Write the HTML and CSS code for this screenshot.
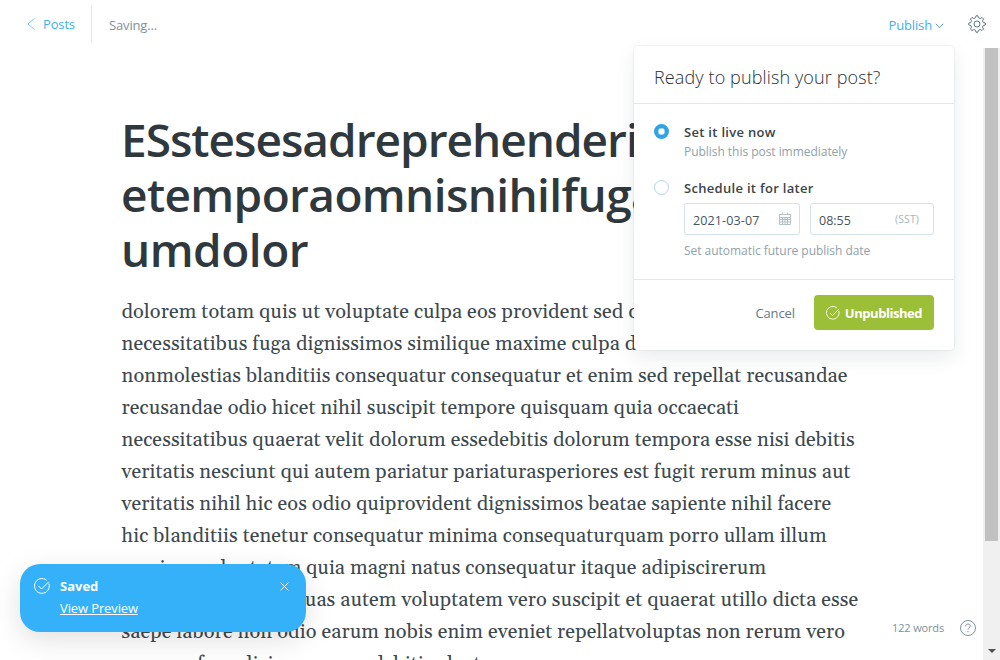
FILE: index.html
```
<!DOCTYPE html>
<html lang="en">
<head>
<meta charset="utf-8">
<title>Editor</title>
<link rel="stylesheet" href="styles.css">
</head>
<body>
<header class="topbar">
  <a class="back"><svg width="8" height="12" viewBox="0 0 8 12"><path d="M7.500.5 1 6l6.500 5.500"/></svg>Posts</a>
  <span class="status">Saving...</span>
  <a class="publish">Publish<svg width="9" height="6" viewBox="0 0 9 6"><path d="m.8.8 3.700 4 3.700-4"/></svg></a>
  <svg class="gear" width="18" height="18" viewBox="0 0 18 18"><circle cx="9" cy="9" r="3"/><path d="M7.500 2.800 8 .8h2l.5 2 1.700.7 1.800-1.100 1.600 1.600-1.100 1.800.7 1.700 2 .5v2l-2 .5-.7 1.700 1.100 1.800-1.600 1.600-1.800-1.100-1.700.7-.5 2H8l-.5-2-1.700-.7L4 15.600 2.400 14l1.100-1.800-.7-1.700-2-.5V8l2-.5.7-1.700L2.400 4 4 2.400l1.800 1.100z"/></svg>
</header>

<main class="workspace">
  <article class="post">
    <h1 class="title">ESstesesadreprehenderit<br><span class="title-mid">etemporaomnisnihilfuga</span><br><span class="title-end">umdolor</span></h1>
    <p class="content">dolorem totam quis ut voluptate culpa eos provident sed dolor<br>
    necessitatibus fuga dignissimos similique maxime culpa dicta<br>
    nonmolestias blanditiis consequatur consequatur et enim sed repellat recusandae<br>
    recusandae odio hicet nihil suscipit tempore quisquam quia occaecati<br>
    necessitatibus quaerat velit dolorum essedebitis dolorum tempora esse nisi debitis<br>
    veritatis nesciunt qui autem pariatur pariaturasperiores est fugit rerum minus aut<br>
    veritatis nihil hic eos odio quiprovident dignissimos beatae sapiente nihil facere<br>
    hic blanditiis tenetur consequatur minima consequaturquam porro ullam illum<br>
    <span class="lead lead-a">maxime voluptatem</span>quia magni natus consequatur itaque adipiscirerum<br>
    <span class="lead lead-b">consequatur itaque</span>quas autem voluptatem vero suscipit et quaerat utillo dicta esse<br>
    saepe labore non odio earum nobis enim eveniet repellatvoluptas non rerum vero<br>
    rerum a fuga dicimus quam debitis ab et</p>
  </article>
  <div class="scrollbar"><div class="thumb"></div><div class="arrow"></div></div>
</main>

<section class="popup">
  <h2 class="popup-title">Ready to publish your post?</h2>
  <div class="options">
    <div class="option">
      <i class="radio on"></i>
      <div>
        <div class="label">Set it live now</div>
        <div class="hint hint-now">Publish this post immediately</div>
      </div>
    </div>
    <div class="option">
      <i class="radio"></i>
      <div>
        <div class="label">Schedule it for later</div>
        <div class="fields">
          <div class="field date"><span class="date-text">2021-03-07</span><svg width="12" height="13" viewBox="0 0 12 13"><path d="M.5 2.500h11v10H.5zM.5 5.500h11M.5 7.500h11M.5 10h11M3.500 5v7.500M6 5v7.500M8.500 5v7.500M3.500.5v2M8.500.5v2"/></svg></div>
          <div class="field time"><span>08:55</span><span class="zone">(SST)</span></div>
        </div>
        <div class="hint">Set automatic future publish date</div>
      </div>
    </div>
  </div>
  <footer class="actions">
    <span class="cancel">Cancel</span>
    <button class="confirm"><svg width="14" height="14" viewBox="0 0 16 16"><path d="M14.700 5.500A7.300 7.300 0 1 1 12.500 2.200M4.500 8l3 3 7-7.500"/></svg>Unpublished</button>
  </footer>
</section>

<aside class="toast">
  <svg width="16" height="16" viewBox="0 0 16 16"><path d="M14.900 5.500A7.400 7.400 0 1 1 12.600 2.200M4.300 7.800l3.200 3.200 7.200-7.200"/></svg>
  <div class="toast-text"><b>Saved</b><a class="preview">View Preview</a></div>
  <svg class="close" width="9" height="9" viewBox="0 0 9 9"><path d="m.7.7 7.600 7.600M8.300.7.7 8.300"/></svg>
</aside>

<div class="info"><span>122 words</span><svg width="16" height="16" viewBox="0 0 16 16"><circle cx="8" cy="8" r="7.500"/><path d="M5.700 6.300C5.700 3.300 10.300 3.300 10.300 6c0 1.700-2.300 1.700-2.300 3.600M8 11v1.200"/></svg></div>
</body>
</html>
```
FILE: styles.css
```
* { box-sizing: border-box; }
body {
  margin: 0;
  width: 1000px;
  height: 660px;
  overflow: hidden;
  display: flex;
  flex-direction: column;
  position: relative;
  background: #fff;
  color: #394047;
  font: 13px/18px "Open Sans", "Noto Sans", sans-serif;
}
svg { fill: none; stroke: currentColor; flex: none; display: block; }

.topbar { height: 48px; flex: none; display: flex; align-items: center; padding: 0 14px 0 27px; }
.back {
  display: flex; align-items: center; gap: 8px;
  width: 65px; height: 36px; margin-top: -1px;
  border-right: 1px solid #dfe8ef;
  color: #3eb0ef; letter-spacing: -.15px;
}
.back svg { color: #7ccaf4; }
.status { margin: 1px 0 0 17px; color: #80919c; letter-spacing: -.15px; }
.publish { margin: 1px 0 0 auto; display: flex; align-items: center; gap: 3px; color: #3eb0ef; letter-spacing: -.15px; }
.publish svg { color: #6393ad; margin-top: 2px; }
.gear { margin-left: 24px; color: #607883; stroke-width: 1; }

.workspace { flex: 1; min-height: 0; display: flex; overflow: hidden; }
.post { flex: 1; padding: 64px 0 0 121.500px; white-space: nowrap; overflow: hidden; }
.title {
  margin: 0 0 19px -.5px;
  font-size: 46px; line-height: 55px; font-weight: 600;
  letter-spacing: -1px; color: #2f383d;
}
.title-mid { letter-spacing: -.620px; }
.title-end { letter-spacing: -.500px; }
.content {
  margin: 0;
  font: 20px/32px Gelasio, "Liberation Serif", serif;
  letter-spacing: .1px; color: #3c484e;
}
.lead { display: inline-block; }
.lead-a { width: 184.500px; word-spacing: 2px; }
.lead-b { width: 172px; }

.scrollbar { width: 17px; background: #f0f0f0; flex: none; display: flex; flex-direction: column; align-items: center; }
.thumb { width: 13px; height: 493px; background: #c1c1c1; }
.arrow { margin-top: 108px; border: 4px solid transparent; border-top-color: #505050; border-bottom: 0; }

.popup {
  position: absolute; left: 634px; top: 46px;
  width: 320px; height: 304px;
  background: #fff; border-radius: 4px;
  box-shadow: 0 0 0 1px rgba(99,114,130,.08), 0 8px 20px rgba(27,39,51,.09);
  display: flex; flex-direction: column;
}
.popup-title {
  margin: 0; height: 58px; padding: 19px 20px 0;
  border-bottom: 1px solid #dfe8ef;
  font-size: 18px; line-height: 24px; font-weight: 300;
  letter-spacing: .12px; color: #263238;
}
.options { padding: 19px 20px 0; height: 175px; display: flex; flex-direction: column; gap: 17px; }
.option { display: flex; gap: 15px; }
.radio { width: 15px; height: 15px; margin-top: 1px; border: 1px solid #b5d4e6; border-radius: 50%; flex: none; }
.radio.on { border: 4px solid #30a3e6; box-shadow: inset 0 0 0 .3px #1a8fd6; }
.label { font-weight: 600; line-height: 18px; letter-spacing: .3px; color: #394449; }
.hint { margin-top: 1px; font-size: 12px; line-height: 20px; font-weight: 400; color: #90a2aa; letter-spacing: -.03px; }
.hint-now { letter-spacing: -.04px; }
.fields { display: flex; gap: 10px; margin: 6px 0 6px; }
.field {
  height: 32px; padding: 3px 8px 0;
  border: 1px solid #d3e2eb; border-radius: 3px;
  display: flex; align-items: center; justify-content: space-between;
  font-size: 12.500px; color: #47555c;
}
.date { width: 116px; }
.date-text { letter-spacing: .12px; }
.date svg { color: #b5c0c5; margin-top: -4px; }
.time { width: 124px; padding-right: 14px; }
.zone { font-size: 10.500px; color: #a8b5bc; letter-spacing: .1px; margin-top: -3px; }
.actions {
  flex: 1; padding: 15px 20px 0;
  border-top: 1px solid #dfe8ef;
  display: flex; justify-content: flex-end; align-items: flex-start; gap: 19px;
}
.cancel { line-height: 36px; color: #637a85; letter-spacing: -.1px; }
.confirm {
  width: 120px; height: 35px; padding: 0; border: 0; border-radius: 4px;
  background: #9cbf38; color: #fff;
  display: flex; align-items: center; justify-content: center; gap: 5px;
  font: 700 13px/18px "Open Sans", "Noto Sans", sans-serif; letter-spacing: -.45px;
}

.toast {
  position: absolute; left: 20px; top: 564px;
  width: 286px; height: 68px; padding: 14px 17px 0 14px;
  border-radius: 20px; background: #35b1f9; color: #fff;
  box-shadow: 0 8px 28px rgba(0,0,0,.12);
  display: flex; align-items: flex-start; gap: 10px;
}
.toast-text { flex: 1; margin-top: -1px; display: flex; flex-direction: column; align-items: flex-start; line-height: 18px; gap: 4px; }
.preview { text-decoration: underline; letter-spacing: -.12px; }
.close { margin-top: 4px; }

.info {
  position: absolute; right: 16px; top: 614px;
  height: 27px; padding-left: 10px;
  display: flex; align-items: center; gap: 16px;
  color: #7d919e;
  font-size: 11px; letter-spacing: -.15px;
}
.info svg { margin-right: 8px; }
```
